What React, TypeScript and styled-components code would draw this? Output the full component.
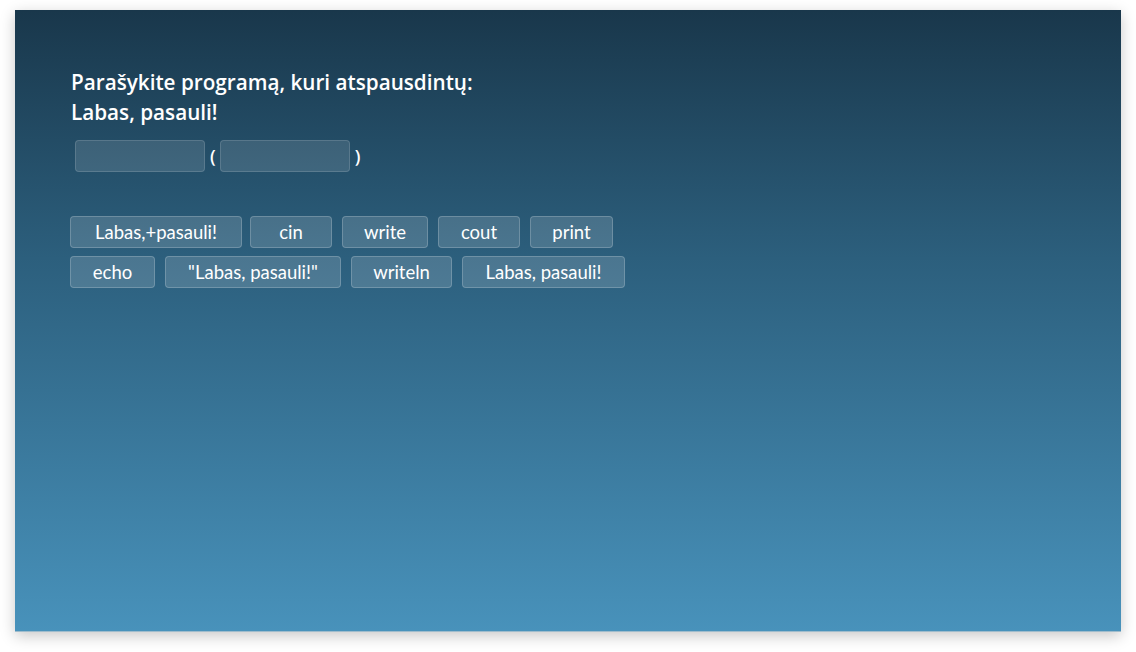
import React from "react";
import styled, { createGlobalStyle } from "styled-components";

const Global = createGlobalStyle`
  html, body { margin: 0; padding: 0; background: #ffffff; }
  body { width: 1136px; height: 652px; overflow: hidden; }
`;

const Page = styled.div`
  padding: 10px 15px 20px 15px;
  box-sizing: border-box;
  width: 1136px;
  height: 652px;
`;

const Panel = styled.main`
  width: 1106px;
  height: 622px;
  box-sizing: border-box;
  padding: 57px 56px;
  background: linear-gradient(180deg, #19374b 0%, #2c5f7d 40%, #4892bb 100%);
  box-shadow: 0 4px 14px rgba(0, 0, 0, 0.22);
  border-bottom: 1px solid #9fbccc;
  display: flex;
  flex-direction: column;
`;

const Prompt = styled.h1`
  margin: 0;
  font-family: "Open Sans", sans-serif;
  font-weight: 600;
  font-size: 20.7px;
  line-height: 30px;
  color: #ffffff;
`;

const SlotRow = styled.div`
  display: flex;
  align-items: center;
  gap: 2px;
  margin-top: 13px;
  padding-left: 4px;
  font-family: "Open Sans", sans-serif;
  font-weight: 600;
  font-size: 18px;
  color: #ffffff;
`;

const Slot = styled.div`
  width: 130px;
  height: 32px;
  box-sizing: border-box;
  border-radius: 4px;
  background: rgba(255, 255, 255, 0.12);
  border: 1px solid rgba(255, 255, 255, 0.14);
`;

const Paren = styled.span`
  padding: 0 2px 0 3px;
`;

const Bank = styled.div`
  margin-top: 44px;
  margin-left: -1px;
  display: flex;
  flex-direction: column;
  gap: 8px;
`;

const BankRow = styled.div`
  display: flex;
  gap: 10px;
`;

const Chip = styled.button<{ $w: number }>`
  width: ${(p) => p.$w}px;
  height: 32px;
  box-sizing: border-box;
  padding: 0;
  border-radius: 4px;
  background: rgba(255, 255, 255, 0.15);
  border: 1px solid rgba(255, 255, 255, 0.2);
  color: #ffffff;
  font-family: Lato, "Open Sans", sans-serif;
  font-size: 18.5px;
  line-height: 30px;
  text-align: center;
  cursor: pointer;
`;

const FirstChip = styled(Chip)`
  margin-right: -2px;
`;

const rows: { t: string; w: number }[][] = [
  [
    { t: "Labas,+pasauli!", w: 172 },
    { t: "cin", w: 82 },
    { t: "write", w: 86 },
    { t: "cout", w: 82 },
    { t: "print", w: 83 },
  ],
  [
    { t: "echo", w: 85 },
    { t: "\"Labas, pasauli!\"", w: 176 },
    { t: "writeln", w: 101 },
    { t: "Labas, pasauli!", w: 163 },
  ],
];

export default function App() {
  return (
    <>
      <Global />
      <Page>
        <Panel>
          <Prompt>
            Parašykite programą, kuri atspausdintų:
            <br />
            Labas, pasauli!
          </Prompt>
          <SlotRow>
            <Slot />
            <Paren>(</Paren>
            <Slot />
            <Paren>)</Paren>
          </SlotRow>
          <Bank>
            {rows.map((r, i) => (
              <BankRow key={i}>
                {r.map((c, j) =>
                  i === 0 && j === 0 ? (
                    <FirstChip key={c.t} $w={c.w}>
                      {c.t}
                    </FirstChip>
                  ) : (
                    <Chip key={c.t} $w={c.w}>
                      {c.t}
                    </Chip>
                  )
                )}
              </BankRow>
            ))}
          </Bank>
        </Panel>
      </Page>
    </>
  );
}
